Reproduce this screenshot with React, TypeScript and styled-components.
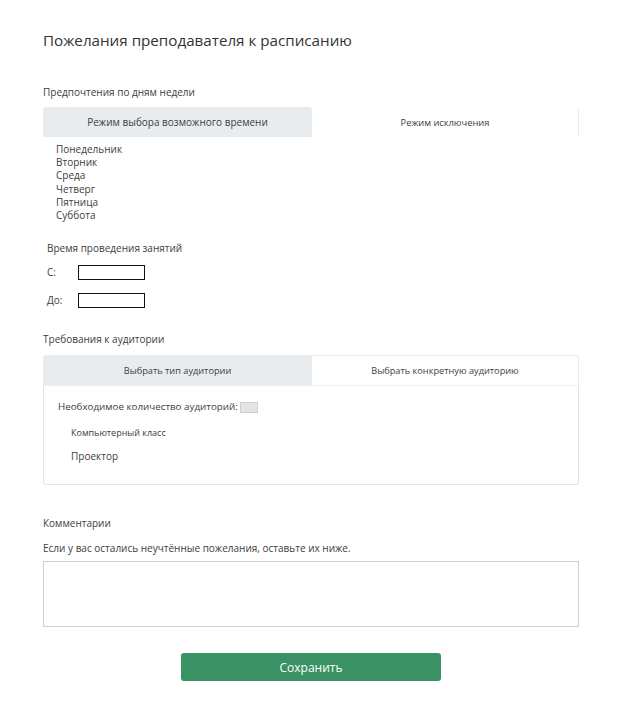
import React from "react";
import styled, { createGlobalStyle } from "styled-components";

const Global = createGlobalStyle`
  html, body { margin: 0; padding: 0; background: #fff; }
  body { font-family: "Open Sans", "Noto Sans", sans-serif; color: #3d3d3d; }
  * { box-sizing: border-box; }
`;

const Page = styled.div`
  width: 624px;
  padding: 29px 45px 0 43px;
  display: flex;
  flex-direction: column;
`;

const Title = styled.h1`
  margin: 0;
  font-size: 15.2px;
  font-weight: 400;
  line-height: 22px;
  color: #333;
`;

const SectionLabel = styled.div<{ $top: number; $left?: number }>`
  margin-top: ${(p) => p.$top}px;
  margin-left: ${(p) => p.$left ?? 0}px;
  font-size: 10px;
  line-height: 14px;
  color: #3d3d3d;
`;

const Tabs = styled.div<{ $top: number }>`
  margin-top: ${(p) => p.$top}px;
  display: grid;
  grid-template-columns: 269px 267px;
  height: 30px;
`;

const Tab = styled.div<{ $active?: boolean; $bordered?: boolean; $size?: number }>`
  display: flex;
  align-items: center;
  justify-content: center;
  font-size: ${(p) => p.$size ?? 9.3}px;
  color: #3d3d3d;
  background: ${(p) => (p.$active ? "#e9ecef" : "#fff")};
  border-radius: 3px 3px 0 0;
  ${(p) => (p.$bordered ? "border-right: 1px solid #ececec;" : "")}
`;

const DayList = styled.ul`
  list-style: none;
  margin: 6px 0 0 13px;
  padding: 0;
  font-size: 10px;
  line-height: 13.2px;
  color: #3d3d3d;
`;

const TimeRow = styled.div<{ $top: number }>`
  margin-top: ${(p) => p.$top}px;
  margin-left: 4px;
  display: flex;
  align-items: center;
  height: 16px;
`;

const TimeLabel = styled.span`
  width: 31px;
  font-size: 10px;
  color: #3d3d3d;
`;

const TimeInput = styled.div`
  width: 67px;
  height: 15px;
  border: 1.5px solid #111;
  background: #fff;
`;

const Card = styled.div`
  margin-top: 9px;
  display: flex;
  flex-direction: column;
`;

const CardTabs = styled.div`
  display: grid;
  grid-template-columns: 269px 267px;
  height: 30px;
`;

const CardTab = styled.div<{ $active?: boolean }>`
  display: flex;
  align-items: center;
  justify-content: center;
  font-size: 9.2px;
  color: #3d3d3d;
  background: ${(p) => (p.$active ? "#e9ecef" : "#fff")};
  border-radius: ${(p) => (p.$active ? "3px 0 0 0" : "0 3px 0 0")};
  ${(p) => (p.$active ? "" : "border: 1px solid #ececec; border-bottom: none; border-left: none;")}
`;

const CardBody = styled.div`
  height: 100px;
  border: 1px solid #e3e3e3;
  border-top: 1px solid #eeeeee;
  border-radius: 0 0 3px 3px;
  padding: 14px 0 0 14px;
  display: flex;
  flex-direction: column;
`;

const CountRow = styled.div`
  display: flex;
  align-items: center;
  font-size: 9.8px;
  line-height: 14px;
  color: #3d3d3d;
`;

const SmallBox = styled.span`
  display: inline-block;
  width: 18px;
  height: 11px;
  margin-left: 2px;
  background: #e4e4e4;
  border: 1px solid #cfcfcf;
`;

const Option = styled.div<{ $top: number; $size: number }>`
  margin-top: ${(p) => p.$top}px;
  margin-left: 13px;
  font-size: ${(p) => p.$size}px;
  line-height: 14px;
  color: #3d3d3d;
`;

const TextArea = styled.div`
  margin-top: 6px;
  height: 66px;
  border: 1px solid #cfcfcf;
  background: #fff;
`;

const ButtonRow = styled.div`
  margin-top: 26px;
  display: flex;
  padding-left: 138px;
`;

const SaveButton = styled.button`
  width: 260px;
  height: 28px;
  border: none;
  border-radius: 3px;
  background: #3a9163;
  color: #fff;
  font-family: "Open Sans", "Noto Sans", sans-serif;
  font-size: 12px;
  cursor: pointer;
`;

const days = ["Понедельник", "Вторник", "Среда", "Четверг", "Пятница", "Суббота"];

export default function App() {
  return (
    <>
      <Global />
      <Page>
        <Title>Пожелания преподавателя к расписанию</Title>
        <SectionLabel $top={34}>Предпочтения по дням недели</SectionLabel>
        <Tabs $top={8}>
          <Tab $active $size={10}>Режим выбора возможного времени</Tab>
          <Tab $bordered>Режим исключения</Tab>
        </Tabs>
        <DayList>
          {days.map((d) => (
            <li key={d}>{d}</li>
          ))}
        </DayList>
        <SectionLabel $top={19} $left={4}>Время проведения занятий</SectionLabel>
        <TimeRow $top={9}>
          <TimeLabel>С:</TimeLabel>
          <TimeInput />
        </TimeRow>
        <TimeRow $top={12}>
          <TimeLabel>До:</TimeLabel>
          <TimeInput />
        </TimeRow>
        <SectionLabel $top={24}>Требования к аудитории</SectionLabel>
        <Card>
          <CardTabs>
            <CardTab $active>Выбрать тип аудитории</CardTab>
            <CardTab>Выбрать конкретную аудиторию</CardTab>
          </CardTabs>
          <CardBody>
            <CountRow>
              Необходимое количество аудиторий:
              <SmallBox />
            </CountRow>
            <Option $top={12} $size={9}>Компьютерный класс</Option>
            <Option $top={9} $size={10}>Проектор</Option>
          </CardBody>
        </Card>
        <SectionLabel $top={31}>Комментарии</SectionLabel>
        <SectionLabel $top={11}>Если у вас остались неучтённые пожелания, оставьте их ниже.</SectionLabel>
        <TextArea />
        <ButtonRow>
          <SaveButton>Сохранить</SaveButton>
        </ButtonRow>
      </Page>
    </>
  );
}
